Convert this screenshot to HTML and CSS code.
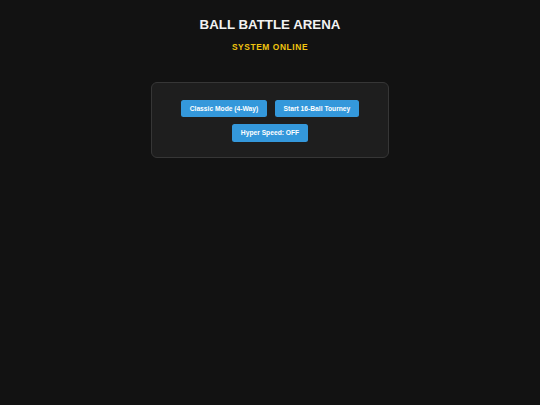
FILE: index.html
```html
<!DOCTYPE html>
<html lang="en">
<head>
<meta charset="utf-8">
<title>Ball Battle Arena</title>
<link rel="stylesheet" href="styles.css">
</head>
<body>
  <header class="header">
    <h1 class="title">BALL BATTLE ARENA</h1>
    <div class="status">SYSTEM ONLINE</div>
  </header>
  <section class="panel">
    <div class="row">
      <button class="btn">Classic Mode (4-Way)</button>
      <button class="btn">Start 16-Ball Tourney</button>
    </div>
    <div class="row">
      <button class="btn">Hyper Speed: OFF</button>
    </div>
  </section>
</body>
</html>
```
FILE: styles.css
```css
html, body {
  margin: 0;
  padding: 0;
  background: #121212;
  height: 100%;
}
body {
  font-family: "Liberation Sans", Arial, sans-serif;
  color: #eeeeee;
  padding-top: 17.3px;
  box-sizing: border-box;
}
.header {
  display: flex;
  flex-direction: column;
  align-items: center;
}
.title {
  margin: 0;
  font-size: 13.3px;
  font-weight: bold;
  color: #f2f2f2;
  line-height: 15.3px;
}
.status {
  margin-top: 9.5px;
  font-size: 8.4px;
  font-weight: bold;
  letter-spacing: 0.6px;
  color: #f1c40f;
  line-height: 10px;
}
.panel {
  box-sizing: border-box;
  width: 238px;
  margin: 30.4px auto 0;
  padding: 16.3px 10px 15.7px;
  background: #1e1e1e;
  border: 1px solid #363636;
  border-radius: 6px;
  display: flex;
  flex-direction: column;
  align-items: center;
  gap: 6.6px;
}
.row {
  display: flex;
  justify-content: center;
  gap: 8.3px;
}
.btn {
  font-family: "Liberation Sans", Arial, sans-serif;
  font-size: 6.7px;
  font-weight: bold;
  height: 17.6px;
  line-height: 17.6px;
  color: #ffffff;
  background: #3498db;
  border: none;
  border-radius: 2.5px;
  padding: 0 8.5px;
  margin: 0;
}
```
